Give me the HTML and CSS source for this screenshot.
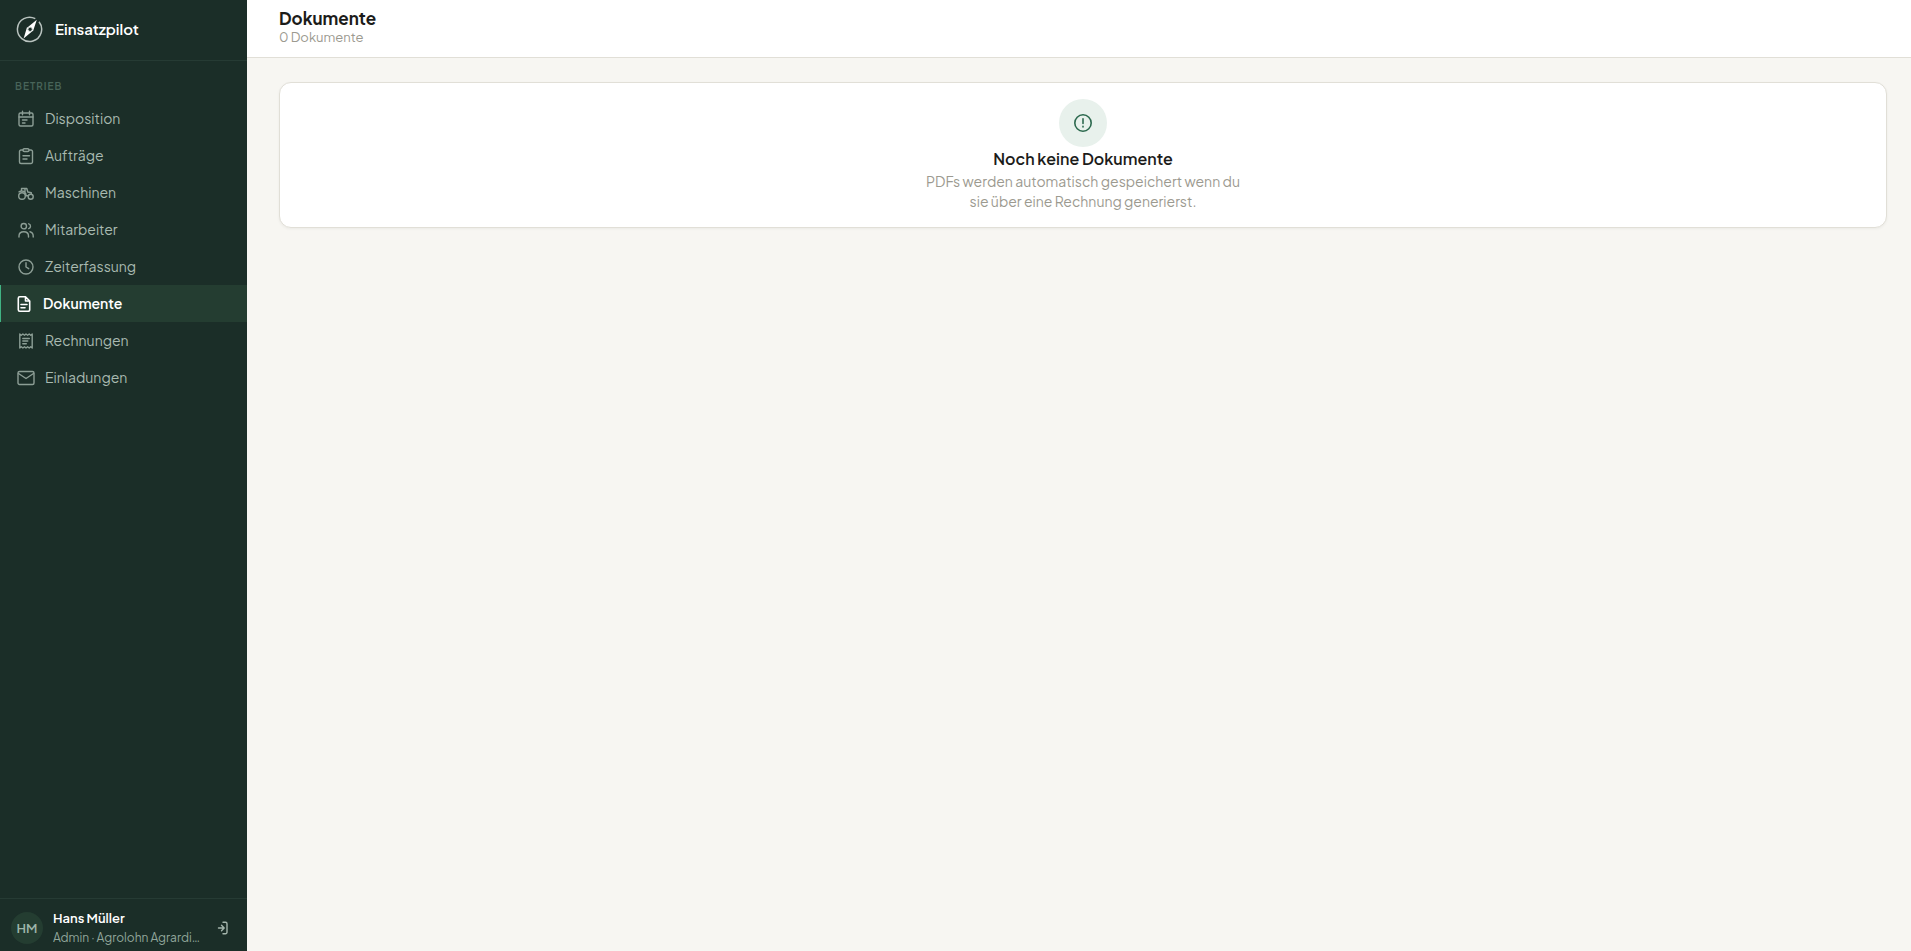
FILE: index.html
```html
<!DOCTYPE html>
<html lang="de">
<head>
<meta charset="utf-8">
<meta name="viewport" content="width=device-width, initial-scale=1">
<title>Dokumente – Einsatzpilot</title>
<link rel="stylesheet" href="styles.css">
</head>
<body class="app">
<aside class="sidebar">
  <div class="brand">
    <svg class="brand-logo" viewBox="0 0 28 28" fill="none" aria-hidden="true">
      <path d="M19.300 3.700A12.100 12.100 0 1 0 23 6.800" stroke="#b9c3bf" stroke-width="1.500"/>
      <path d="M20.800 4.800 17 16.200 11.400 12.600ZM7.600 23.600 11 12.300 16.600 16Z" fill="#fff"/>
      <circle cx="14.100" cy="14.300" r="2.200" fill="#1b2e28" stroke="#dfe5e2"/>
    </svg>
    <span class="brand-name">Einsatzpilot</span>
  </div>
  <nav class="nav" aria-label="Betrieb">
    <h2 class="nav-heading">BETRIEB</h2>
    <a class="nav-item" href="#"><svg class="icon" viewBox="0 0 18 18"><rect x="2" y="3" width="14" height="13" rx="1.500"/><path d="M2 7h14M5.500 1.200v3.500M12.500 1.200v3.500M5.500 10h4.500M5.500 13h2.500"/></svg>Disposition</a>
    <a class="nav-item" href="#"><svg class="icon" viewBox="0 0 18 18"><path d="M6 3H4a1.500 1.500 0 0 0-1.500 1.500V15A1.500 1.500 0 0 0 4 16.500h10a1.500 1.500 0 0 0 1.500-1.500V4.500A1.500 1.500 0 0 0 14 3h-2M6 8.700h6.500M6 12h4"/><rect x="6" y="1.800" width="6" height="2.700" rx="1.200"/></svg>Aufträge</a>
    <a class="nav-item" href="#"><svg class="icon" viewBox="0 0 18 18"><circle cx="5" cy="12" r="3.300"/><circle cx="13.700" cy="12.700" r="2.500"/><path d="M2 7.800C4 6.700 6 6.800 7.800 8.300c1 .8 1.300 2 1.300 3.400h2M4.500 6.800V4.500h5.300l1 3.500 3.500.8v1.400M8 4.800v3"/></svg>Maschinen</a>
    <a class="nav-item" href="#"><svg class="icon" viewBox="0 0 18 18"><circle cx="6.800" cy="5.200" r="2.700"/><path d="M2 16v-1c0-2.500 2-4.300 4.800-4.300s4.700 1.800 4.700 4.300v1M11.700 2.800a2.500 2.500 0 0 1 0 4.800M13 10.700c2 .5 3.200 2 3.200 4.300v1"/></svg>Mitarbeiter</a>
    <a class="nav-item" href="#"><svg class="icon" viewBox="0 0 18 18"><circle cx="9" cy="9" r="7"/><path d="M9 4.800V9l2.700 1.700"/></svg>Zeiterfassung</a>
    <a class="nav-item nav-item-active" href="#" aria-current="page"><svg class="icon" viewBox="0 0 18 18"><path d="M10.500 1.700H4.800a1.500 1.500 0 0 0-1.500 1.500v11.600a1.500 1.500 0 0 0 1.500 1.500h8.400a1.500 1.500 0 0 0 1.500-1.500V6Zm0 0V6h4.200M6 9.500h6M6 12.700h4"/></svg>Dokumente</a>
    <a class="nav-item" href="#"><svg class="icon" viewBox="0 0 18 18"><path d="M2.800 2v14l1.500-1.200 1.600 1.200 1.600-1.200L9 16l1.600-1.200 1.600 1.200 1.500-1.200 1.500 1.200V2l-1.500 1.200L12.200 2l-1.600 1.200L9 2 7.500 3.200 5.900 2 4.300 3.200ZM5.800 6.500h6.500M5.800 9h5M5.800 11.700h3.500"/></svg>Rechnungen</a>
    <a class="nav-item" href="#"><svg class="icon" viewBox="0 0 18 18"><rect x="1" y="2.500" width="16" height="13" rx="1.500"/><path d="m1.500 4.500 7.500 5 7.500-5"/></svg>Einladungen</a>
  </nav>
  <footer class="account">
    <span class="avatar">HM</span>
    <div class="account-text">
      <span class="account-name">Hans Müller</span>
      <span class="account-role">Admin · Agrolohn Agrardi…</span>
    </div>
    <button class="logout" type="button" aria-label="Abmelden"><svg class="logout-icon" viewBox="0 0 14 14"><path d="M6 1.300h2.500A1.500 1.500 0 0 1 10 2.800v8.400a1.500 1.500 0 0 1-1.500 1.500H6M1.500 7H7M4.500 4.300 7.200 7 4.500 9.700"/></svg></button>
  </footer>
</aside>
<div class="page">
  <header class="page-header">
    <h1 class="page-title">Dokumente</h1>
    <p class="page-count">0 Dokumente</p>
  </header>
  <main class="content">
    <section class="card">
      <span class="empty-badge"><svg class="empty-icon" viewBox="0 0 20 20"><circle cx="10" cy="10" r="8.200"/><path d="M10 5.800v4.700M10 13.300v.7"/></svg></span>
      <h2 class="empty-title">Noch keine Dokumente</h2>
      <p class="empty-text">PDFs werden automatisch gespeichert wenn du sie über eine Rechnung generierst.</p>
    </section>
  </main>
</div>
</body>
</html>
```
FILE: styles.css
```css
* { box-sizing: border-box; }
h1, h2, p { margin: 0; }

.app {
  margin: 0;
  min-height: 100vh;
  display: flex;
  background: #f7f6f2;
  color: #1c1c1a;
  font-family: "Plus Jakarta Sans", Inter, "Open Sans", sans-serif;
  font-size: 14px;
}

/* Sidebar */
.sidebar {
  width: 247px;
  flex: none;
  display: flex;
  flex-direction: column;
  background: #1b2e28;
}
.brand {
  display: flex;
  align-items: center;
  gap: 11px;
  padding: 15px 16px 17px;
  border-bottom: 1px solid #263b34;
}
.brand-logo { width: 28px; height: 28px; }
.brand-name { color: #fff; font-size: 15px; font-weight: 600; line-height: 18px; }

.nav { flex: 1; padding-top: 17px; }
.nav-heading {
  padding: 0 15px 6px;
  color: #486459;
  font-size: 10px;
  font-weight: 600;
  line-height: 16px;
  letter-spacing: 1px;
}
.nav-item {
  display: flex;
  align-items: center;
  gap: 10px;
  padding: 8px 17px;
  color: #a9bab1;
  font-size: 14px;
  line-height: 21px;
  text-decoration: none;
}
.nav-item-active {
  padding-left: 14px;
  border-left: 1px solid #40b383;
  background: #243d31;
  color: #fff;
  font-weight: 600;
}
.icon, .logout-icon, .empty-icon {
  flex: none;
  fill: none;
  stroke: currentColor;
  stroke-linecap: round;
  stroke-linejoin: round;
}
.icon { width: 18px; height: 18px; stroke-width: 1.4; opacity: .8; }
.nav-item-active .icon { stroke-width: 1.6; opacity: 1; }

.account {
  display: flex;
  align-items: center;
  gap: 10px;
  padding: 9px 16px 3px 11px;
  border-top: 1px solid #263b34;
}
.avatar {
  display: grid;
  place-items: center;
  width: 32px;
  height: 32px;
  flex: none;
  border-radius: 50%;
  background: #243d31;
  color: #9db5a9;
  font-size: 13px;
  font-weight: 600;
}
.account-text { min-width: 0; display: flex; flex-direction: column; }
.account-name { color: #fff; font-size: 13px; font-weight: 600; line-height: 20px; }
.account-role {
  overflow: hidden;
  color: #91a69b;
  font-size: 12px;
  line-height: 20px;
  text-overflow: ellipsis;
  white-space: nowrap;
}
.logout {
  display: flex;
  margin-left: auto;
  padding: 0;
  border: 0;
  background: none;
  color: #a4b5ac;
}
.logout-icon { width: 14px; height: 14px; stroke-width: 1.4; }

/* Page */
.page { flex: 1; min-width: 0; }
.page-header {
  padding: 8px 32px 11px;
  border-bottom: 1px solid #e1dfd7;
  background: #fff;
}
.page-title { font-size: 17px; font-weight: 700; line-height: 20px; }
.page-count { color: #9c9a90; font-size: 13px; line-height: 18px; }

.content { padding: 24px 24px 24px 32px; }
.card {
  display: flex;
  flex-direction: column;
  align-items: center;
  padding: 16px;
  border: 1px solid #e1dfd7;
  border-radius: 12px;
  background: #fff;
  box-shadow: 0 1px 3px rgba(0, 0, 0, .05);
  text-align: center;
}
.empty-badge {
  display: grid;
  place-items: center;
  width: 48px;
  height: 48px;
  border-radius: 50%;
  background: #e8f1ec;
  color: #2d6a4f;
}
.empty-icon { width: 20px; height: 20px; stroke-width: 1.6; }
.empty-title { font-size: 16px; font-weight: 600; line-height: 24px; }
.empty-text { max-width: 320px; color: #9c9a90; font-size: 14px; line-height: 20px; }
```
